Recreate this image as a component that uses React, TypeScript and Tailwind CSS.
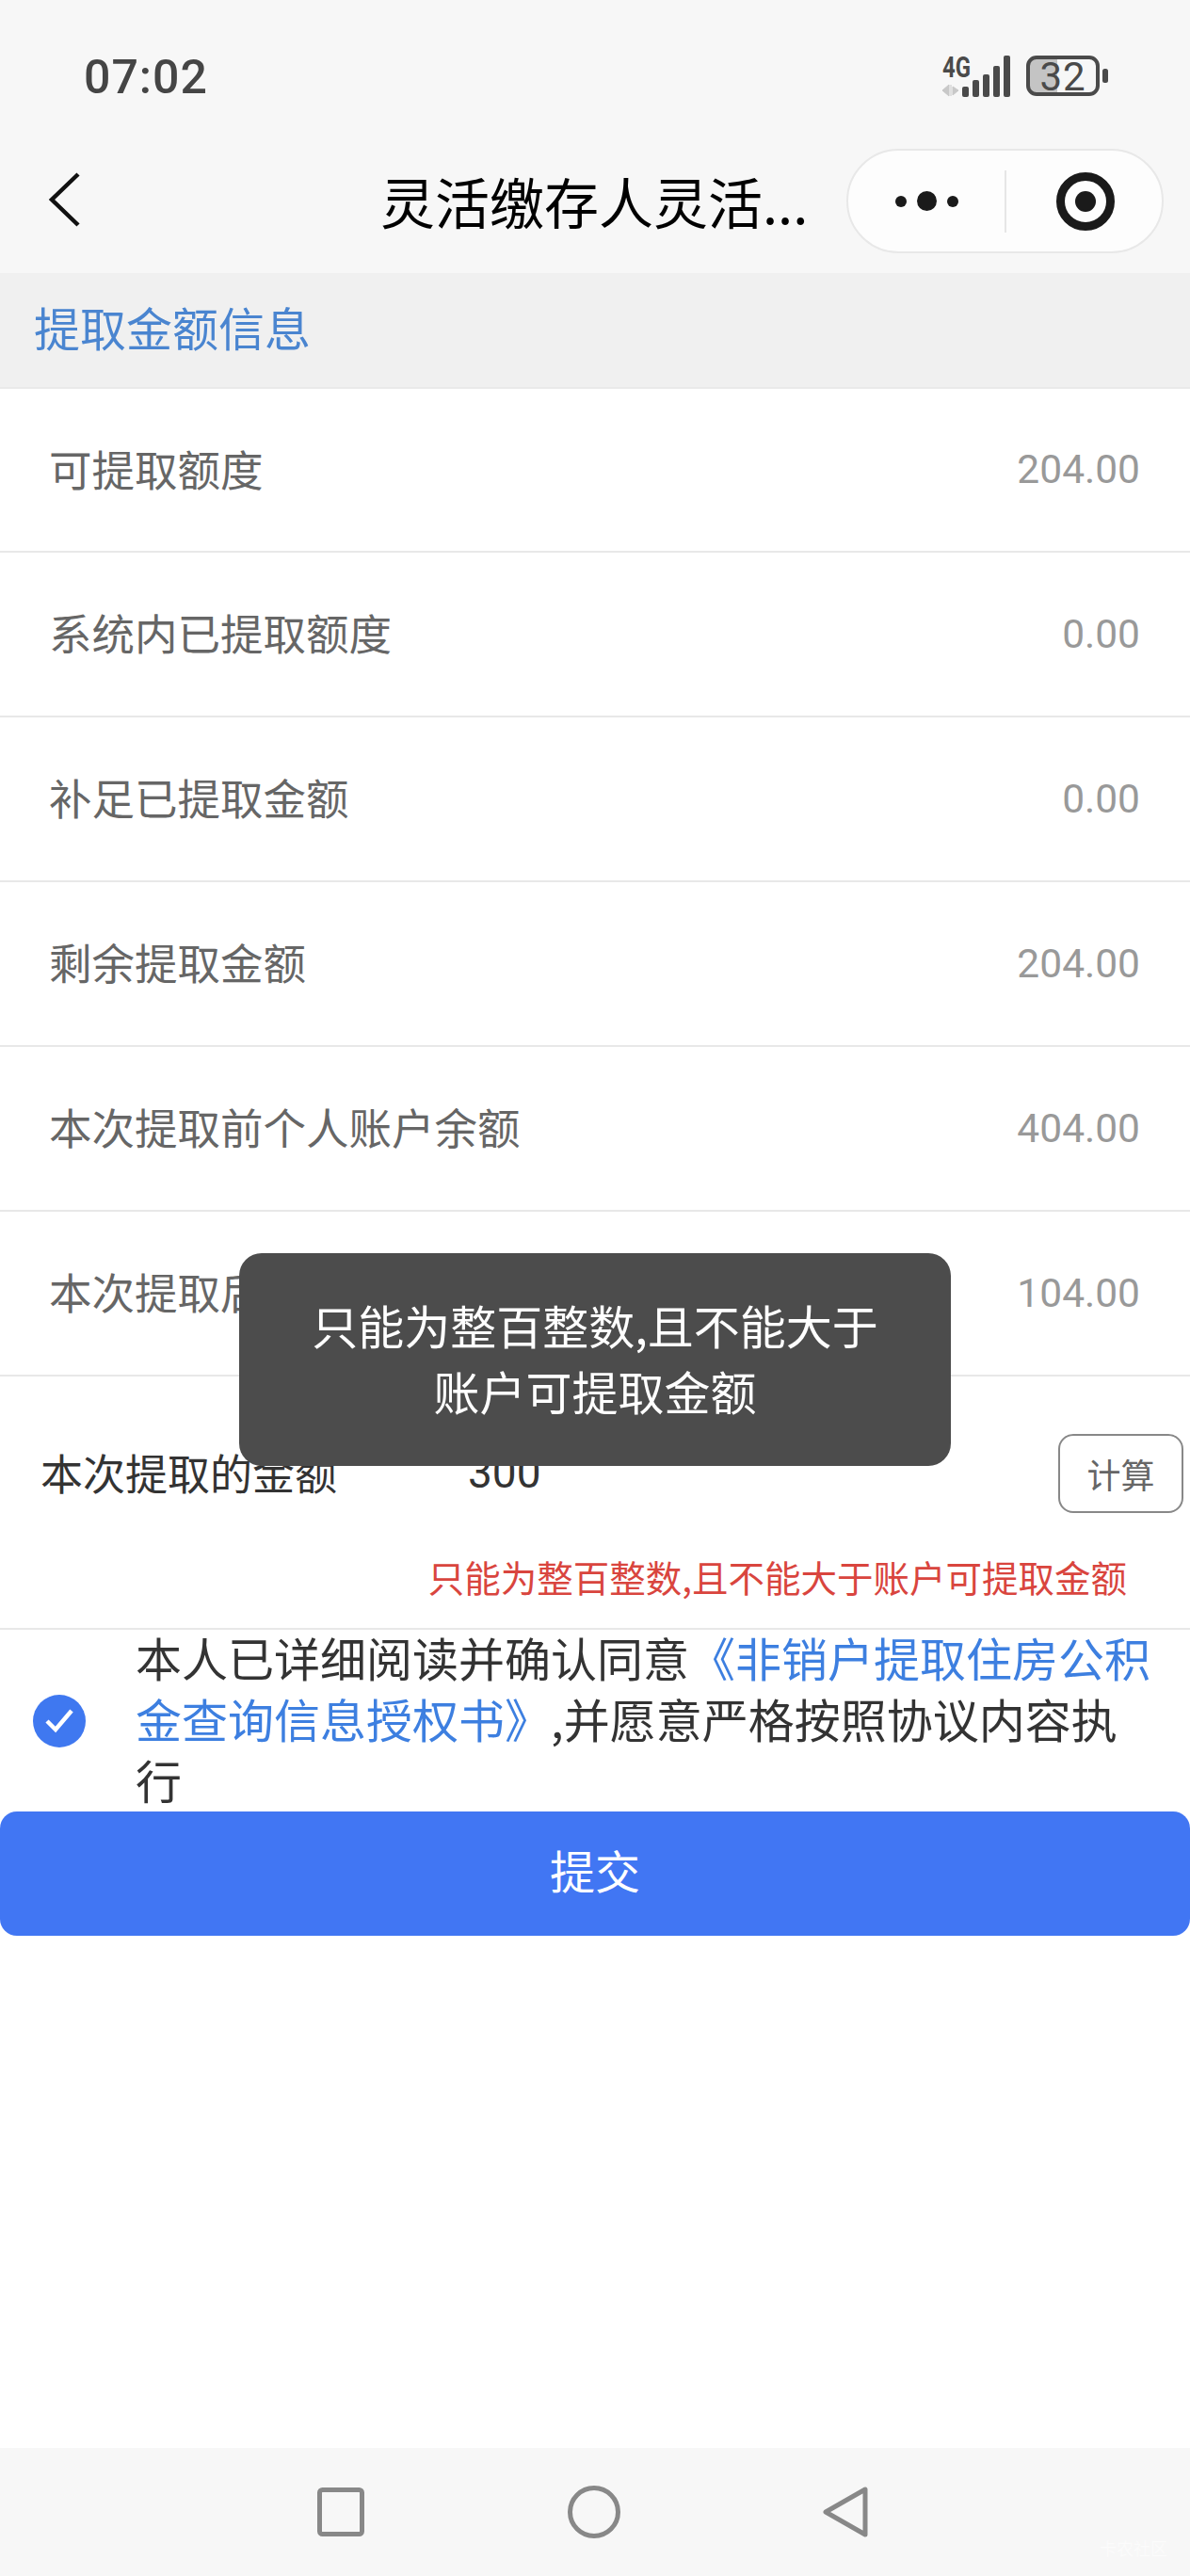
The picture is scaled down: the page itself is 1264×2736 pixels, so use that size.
const F = '[font-family:"Noto_Sans_CJK_SC","Noto_Sans",sans-serif]';

const rows: [string, string][] = [
  ["可提取额度", "204.00"],
  ["系统内已提取额度", "0.00"],
  ["补足已提取金额", "0.00"],
  ["剩余提取金额", "204.00"],
  ["本次提取前个人账户余额", "404.00"],
  ["本次提取后个人账户余额", "104.00"],
];

function StatusIcons() {
  return (
    <svg width="180" height="66" viewBox="0 -10 180 66" className="block">
      <text x="1" y="24" fontFamily="Roboto, sans-serif" fontWeight="700" fontSize="32" fill="#4a4a4a" textLength="30" lengthAdjust="spacingAndGlyphs">4G</text>
      <path d="M8 32v12l-7-6zM10 32v12M12 34l6 4-6 5z" fill="#c8c8c8" stroke="#c8c8c8" strokeWidth="1" />
      <rect x="22" y="34" width="7" height="11" rx="2" fill="#4a4a4a" />
      <rect x="33" y="27" width="7" height="18" rx="2" fill="#4a4a4a" />
      <rect x="44" y="21" width="7" height="24" rx="2" fill="#4a4a4a" />
      <rect x="55" y="12" width="7" height="33" rx="2" fill="#4a4a4a" />
      <rect x="66" y="1" width="7" height="44" rx="2" fill="#4a4a4a" />
      <path d="M98 3h25v39h-25a6 6 0 0 1-6-6v-27a6 6 0 0 1 6-6z" fill="#c4c4c4" />
      <rect x="92" y="3" width="74" height="39" rx="9" fill="none" stroke="#4a4a4a" strokeWidth="4" />
      <text x="129" y="38" textAnchor="middle" fontFamily="Roboto, sans-serif" fontSize="42" fill="#4a4a4a" letterSpacing="1">32</text>
      <rect x="171" y="15" width="6" height="15" rx="2.5" fill="#4a4a4a" />
    </svg>
  );
}

export default function App() {
  return (
    <div className={`relative flex h-[2736px] w-[1264px] flex-col overflow-hidden bg-white ${F}`}>
      <header className="bg-[#f7f7f7]">
        <div className="flex h-[158px] items-start justify-between pl-[89px] pr-[84px] pt-[48px]">
          <span className="mt-[6px] font-['Roboto'] text-[50px] font-medium leading-[56px] tracking-[1px] text-[#454545]">07:02</span>
          <StatusIcons />
        </div>
        <div className="flex h-[132px] items-start pl-[50px] pr-[28px]">
          <svg width="36" height="60" viewBox="0 0 36 60" className="mt-[24px]">
            <path d="M33 3 5 30l28 27" fill="none" stroke="#111" strokeWidth="4.5" />
          </svg>
          <div className="ml-[318px] w-[495px] pt-[20px] text-[58px] leading-[70px] text-black">灵活缴存人灵活...</div>
          <div className="flex h-[111px] w-[337px] items-center rounded-full border-2 border-[#e8e8e8] bg-[#fdfdfd]">
            <div className="flex h-full w-[166px] items-center justify-center gap-[11px]">
              <span className="h-[12px] w-[12px] rounded-full bg-[#1a1a1a]" />
              <span className="h-[21px] w-[21px] rounded-full bg-[#1a1a1a]" />
              <span className="h-[12px] w-[12px] rounded-full bg-[#1a1a1a]" />
            </div>
            <div className="h-[66px] w-[2px] bg-[#e6e6e6]" />
            <div className="flex flex-1 items-center justify-center pl-[2px]">
              <div className="flex h-[62px] w-[62px] items-center justify-center rounded-full border-[9px] border-[#1a1a1a]">
                <span className="h-[22px] w-[22px] rounded-full bg-[#1a1a1a]" />
              </div>
            </div>
          </div>
        </div>
      </header>

      <section className="flex h-[123px] items-center border-b-2 border-[#e9e9e9] bg-[#f0f0f0] pb-[8px] pl-[36px]">
        <h2 className="text-[49px] font-normal leading-[60px] text-[#4a85d0]">提取金额信息</h2>
      </section>

      {rows.map(([label, value], i) => (
        <div key={label} className={`flex shrink-0 items-center justify-between border-b-2 border-[#e8e8e8] pl-[52px] pr-[53px] ${i === 0 ? "h-[174px]" : "h-[175px]"}`}>
          <span className="mb-[5px] text-[45.5px] leading-[56px] text-[#666]">{label}</span>
          <span className="font-['Roboto'] text-[42.5px] leading-[56px] text-[#999]">{value}</span>
        </div>
      ))}

      <div className="flex h-[269px] shrink-0 flex-col border-b-2 border-[#e8e8e8]">
        <div className="flex h-[187px] items-center pl-[43px] pr-[7px] pt-[18px]">
          <span className="mb-[2px] w-[454px] text-[45px] leading-[56px] text-[#333]">本次提取的金额</span>
          <span className="mb-[2px] font-['Roboto'] text-[46px] leading-[56px] text-[#333]">300</span>
          <div className="ml-auto flex h-[84px] w-[133px] items-center justify-center rounded-[16px] border-2 border-[#888] text-[36px] text-[#666]">计算</div>
        </div>
        <div className="pr-[67px] text-right text-[38.5px] leading-[50px] text-[#d9453e]">只能为整百整数,且不能大于账户可提取金额</div>
      </div>

      <div className="flex h-[193px] shrink-0 items-center">
        <div className="ml-[35px] flex h-[56px] w-[56px] shrink-0 items-center justify-center rounded-full bg-[#3f78f0]">
          <svg width="34" height="34" viewBox="0 0 34 34"><path d="m4 17 9 9L30 6" fill="none" stroke="#fff" strokeWidth="4.5" /></svg>
        </div>
        <p className="mb-[6px] ml-[53px] w-[1090px] text-[49px] leading-[65px] text-[#333]">
          本人已详细阅读并确认同意<span className="text-[#3d7fe0]">《非销户提取住房公积金查询信息授权书》</span>,并愿意严格按照协议内容执行
        </p>
      </div>

      <button className="flex h-[132px] w-full shrink-0 items-center justify-center rounded-[18px] bg-[#4176f3] pb-[10px] text-[48px] text-white">提交</button>

      <div className="flex-1" />

      <nav className="relative flex h-[136px] shrink-0 items-center bg-[#f7f7f7] pl-[337px]">
        <svg width="50" height="52" viewBox="0 0 50 52"><rect x="2.5" y="2.5" width="45" height="47" rx="3" fill="none" stroke="#888" strokeWidth="5" /></svg>
        <svg width="56" height="56" viewBox="0 0 56 56" className="ml-[216px]"><circle cx="28" cy="28" r="25.5" fill="none" stroke="#888" strokeWidth="5" /></svg>
        <svg width="48" height="56" viewBox="0 0 48 56" className="ml-[215px]"><path d="M45 4v48L3 28z" fill="none" stroke="#888" strokeWidth="5" strokeLinejoin="round" /></svg>
        <span className="absolute bottom-[16px] right-[24px] text-[18px] text-white/50">卡农社区</span>
      </nav>

      <div className="absolute left-[254px] top-[1331px] flex h-[226px] w-[756px] items-center justify-center rounded-[24px] bg-[#4c4c4c] px-[60px] pb-[4px] text-center text-[49px] leading-[70px] text-white">
        只能为整百整数,且不能大于账户可提取金额
      </div>
    </div>
  );
}
